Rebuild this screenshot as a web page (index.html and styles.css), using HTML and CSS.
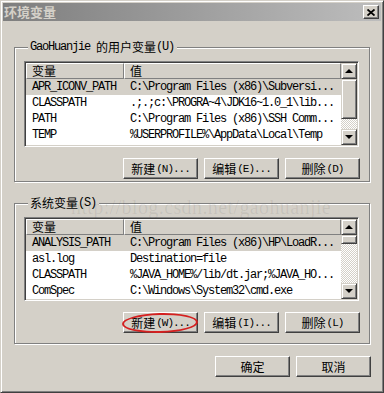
FILE: index.html
```html
<!DOCTYPE html>
<html lang="zh-CN">
  <head>
    <meta charset="UTF-8" />
    <title>环境变量</title>
    <link rel="stylesheet" href="styles.css">
  </head>
  <body>
    <div class="window">
      <div class="titlebar">
        <span class="title">环境变量</span>
        <span class="close-btn">
          <svg width="8" height="7" viewBox="0 0 8 7">
            <path d="M0.5 0.5 L7.5 6.5 M7.5 0.5 L0.5 6.5" stroke="#000" stroke-width="1.8" fill="none" />
          </svg>
        </span>
      </div>

      <div class="dialog-body">
        <fieldset class="group group-user">
          <legend><span class="latin">GaoHuanjie&nbsp;</span>的用户变量<span class="latin">(U)</span></legend>

          <div class="listbox">
            <div class="list-main">
              <div class="list-head">
                <span class="head-cell col-name">变量</span>
                <span class="head-cell col-value">值</span>
              </div>
              <div class="row selected">
                <span class="col-name latin">APR_ICONV_PATH</span>
                <span class="col-value latin">C:\Program Files (x86)\Subversi...</span>
              </div>
              <div class="row">
                <span class="col-name latin">CLASSPATH</span>
                <span class="col-value latin">.;.;c:\PROGRA~4\JDK16~1.0_1\lib...</span>
              </div>
              <div class="row">
                <span class="col-name latin">PATH</span>
                <span class="col-value latin">C:\Program Files (x86)\SSH Comm...</span>
              </div>
              <div class="row">
                <span class="col-name latin">TEMP</span>
                <span class="col-value latin">%USERPROFILE%\AppData\Local\Temp</span>
              </div>
            </div>
            <div class="scrollbar">
              <div class="sb-btn"><span class="arrow-up"></span></div>
              <div class="sb-thumb thumb-large"></div>
              <div class="sb-track"></div>
              <div class="sb-btn"><span class="arrow-down"></span></div>
            </div>
          </div>

          <div class="btn-row">
            <button class="btn">新建<span class="latin">(N)...</span></button>
            <button class="btn">编辑<span class="latin">(E)...</span></button>
            <button class="btn">删除<span class="latin">(D)</span></button>
          </div>
        </fieldset>

        <fieldset class="group group-system">
          <legend>系统变量<span class="latin">(S)</span></legend>

          <div class="listbox listbox-short">
            <div class="list-main">
              <div class="list-head">
                <span class="head-cell col-name">变量</span>
                <span class="head-cell col-value">值</span>
              </div>
              <div class="row selected">
                <span class="col-name latin">ANALYSIS_PATH</span>
                <span class="col-value latin">C:\Program Files (x86)\HP\LoadR...</span>
              </div>
              <div class="row">
                <span class="col-name latin">asl.log</span>
                <span class="col-value latin">Destination=file</span>
              </div>
              <div class="row">
                <span class="col-name latin">CLASSPATH</span>
                <span class="col-value latin">%JAVA_HOME%/lib/dt.jar;%JAVA_HO...</span>
              </div>
              <div class="row">
                <span class="col-name latin">ComSpec</span>
                <span class="col-value latin">C:\Windows\System32\cmd.exe</span>
              </div>
            </div>
            <div class="scrollbar">
              <div class="sb-btn"><span class="arrow-up"></span></div>
              <div class="sb-thumb thumb-small"></div>
              <div class="sb-track"></div>
              <div class="sb-btn"><span class="arrow-down"></span></div>
            </div>
          </div>

          <div class="btn-row">
            <button class="btn marked">新建<span class="latin">(W)...</span><span class="mark"></span></button>
            <button class="btn">编辑<span class="latin">(I)...</span></button>
            <button class="btn">删除<span class="latin">(L)</span></button>
          </div>
        </fieldset>

        <div class="btn-row dialog-actions">
          <button class="btn">确定</button>
          <button class="btn">取消</button>
        </div>
      </div>

      <div class="watermark">http://blog.csdn.net/gaohuanjie</div>
    </div>
  </body>
</html>
```

FILE: styles.css
```css
* {
  box-sizing: border-box;
}

body {
  margin: 0;
  background: #d4d0c8;
  font-family: "Noto Sans CJK SC", "Liberation Sans", sans-serif;
  font-size: 12px;
  color: #000;
}

.window {
  position: relative;
  width: 384px;
  height: 393px;
  padding: 2px;
  background: #d4d0c8;
  border: 1px solid;
  border-color: #d4d0c8 #404040 #404040 #d4d0c8;
  box-shadow: inset 1px 1px #fff, inset -1px -1px #808080;
}

.titlebar {
  height: 18px;
  display: flex;
  justify-content: space-between;
  align-items: center;
  padding: 0 2px 0 1px;
  background: linear-gradient(90deg, #7e7e7e 0%, #bdbdbd 100%);
}

.title {
  font-size: 13px;
  font-weight: bold;
  line-height: 18px;
  color: #d4d0c8;
}

.close-btn {
  width: 16px;
  height: 14px;
  display: flex;
  justify-content: center;
  align-items: center;
  background: #d4d0c8;
  border: 1px solid;
  border-color: #fff #404040 #404040 #fff;
  box-shadow: inset -1px -1px #808080;
}

.close-btn svg {
  display: block;
}

.latin {
  font-family: "Liberation Mono", monospace;
  font-size: 12px;
  letter-spacing: -1.2px;
}

.dialog-body {
  padding: 19px 11px 0 11px;
}

.group {
  margin: 0;
  padding: 7px 10px 2px 9px;
  min-width: 0;
  border: 1px solid #808080;
  box-shadow: inset 1px 1px #fff, 1px 1px #fff;
}

.group legend {
  display: flex;
  align-items: center;
  height: 14px;
  margin-left: 4px;
  padding: 0 3px 0 2px;
  line-height: 14px;
  background: #d4d0c8;
}

.group-system {
  margin-top: 14px;
  padding-bottom: 10px;
}

.listbox {
  height: 86px;
  display: flex;
  padding: 1px;
  background: #fff;
  border: 1px solid;
  border-color: #808080 #fff #fff #808080;
  box-shadow: inset 1px 1px #404040, inset -1px -1px #d4d0c8;
}

.listbox-short {
  height: 84px;
}

.list-main {
  flex: 1;
  min-width: 0;
  overflow: hidden;
}

.list-head {
  display: flex;
  height: 16px;
}

.head-cell {
  height: 16px;
  line-height: 14px;
  background: #d4d0c8;
  border: 1px solid;
  border-color: #fff #808080 #808080 #fff;
}

.head-cell.col-name {
  width: 98px;
  padding-left: 5px;
}

.head-cell.col-value {
  flex: 1;
  padding-left: 5px;
}

.row {
  display: flex;
  height: 16px;
  line-height: 16px;
  white-space: nowrap;
}

.row.selected {
  background: #d4d0c8;
}

.row .col-name {
  width: 98px;
  padding-left: 6px;
}

.row .col-value {
  flex: 1;
  padding-left: 6px;
}

.scrollbar {
  width: 16px;
  display: flex;
  flex-direction: column;
}

.sb-btn,
.sb-thumb {
  background: #d4d0c8;
  border: 1px solid;
  border-color: #d4d0c8 #404040 #404040 #d4d0c8;
  box-shadow: inset 1px 1px #fff, inset -1px -1px #808080;
}

.sb-btn {
  height: 16px;
  display: flex;
  justify-content: center;
  align-items: center;
}

.arrow-up {
  border-left: 4px solid transparent;
  border-right: 4px solid transparent;
  border-bottom: 4px solid #000;
}

.arrow-down {
  border-left: 4px solid transparent;
  border-right: 4px solid transparent;
  border-top: 4px solid #000;
}

.thumb-large {
  height: 40px;
}

.thumb-small {
  height: 9px;
}

.sb-track {
  flex: 1;
  background-image: conic-gradient(#fff 25%, #d4d0c8 0 50%, #fff 0 75%, #d4d0c8 0);
  background-size: 2px 2px;
}

.btn-row {
  display: flex;
  justify-content: flex-end;
  gap: 6px;
  margin-top: 11px;
  margin-right: -1px;
}

.btn {
  position: relative;
  width: 75px;
  height: 21px;
  padding: 0;
  display: flex;
  justify-content: center;
  align-items: center;
  background: #d4d0c8;
  font-family: "Noto Sans CJK SC", sans-serif;
  font-size: 12px;
  color: #000;
  border: 1px solid;
  border-color: #fff #404040 #404040 #fff;
  box-shadow: inset -1px -1px #808080;
}

.btn .latin {
  font-size: 11px;
  letter-spacing: -1px;
  margin-left: 1px;
}

.mark {
  position: absolute;
  left: -2px;
  top: 0;
  width: 76px;
  height: 20px;
  border: 2.5px solid #d42020;
  border-radius: 50%;
  transform: rotate(-1.5deg);
}

.dialog-actions {
  margin-top: 12px;
}

.watermark {
  position: absolute;
  left: 70px;
  top: 196px;
  font-family: "Liberation Serif", serif;
  font-size: 20px;
  line-height: 20px;
  letter-spacing: 0.4px;
  color: rgba(60, 60, 60, 0.09);
  pointer-events: none;
}
```
